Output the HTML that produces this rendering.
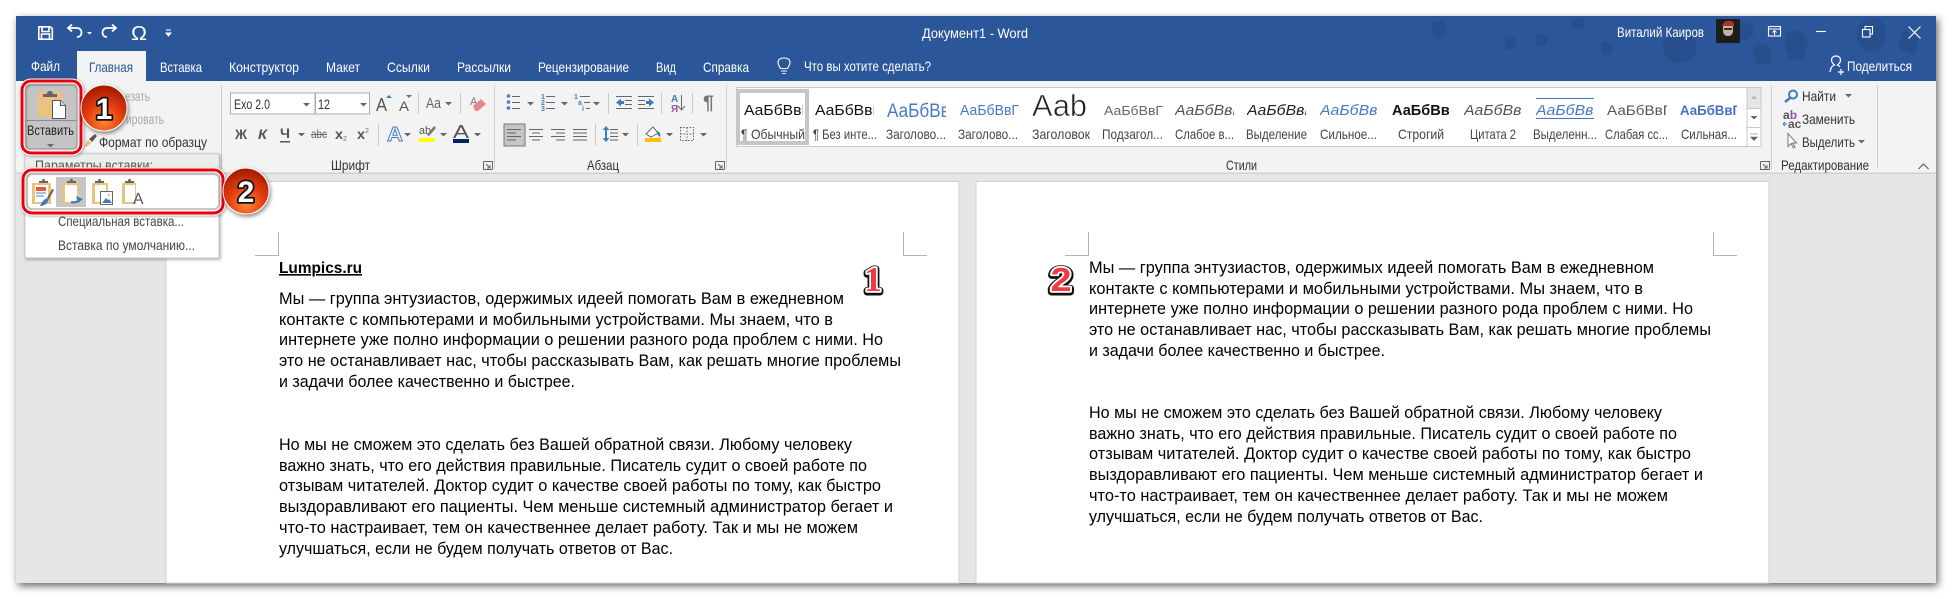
<!DOCTYPE html>
<html lang="ru"><head><meta charset="utf-8"><title>Документ1 - Word</title>
<style>
html,body{margin:0;padding:0;background:#fff;width:1952px;height:599px;overflow:hidden}
svg{display:block}
text{font-family:"Liberation Sans","Noto Sans CJK SC",sans-serif}
.t{font-size:14px;fill:#fff}
.l{font-size:14px;fill:#444}
.g{font-size:14px;fill:#aaa}
.b{font-size:17px;fill:#000}
</style></head><body>
<svg width="1952" height="599" viewBox="0 0 1952 599" xmlns="http://www.w3.org/2000/svg">
<defs>
<filter id="ws" x="-5%" y="-10%" width="110%" height="120%"><feDropShadow dx="2" dy="3" stdDeviation="4" flood-color="#000" flood-opacity=".6"/></filter>
<filter id="ms" x="-10%" y="-10%" width="120%" height="120%"><feDropShadow dx="1" dy="1" stdDeviation="1.5" flood-color="#000" flood-opacity=".35"/></filter>
<filter id="bs" x="-30%" y="-30%" width="160%" height="160%"><feDropShadow dx="1" dy="2" stdDeviation="2" flood-color="#000" flood-opacity=".5"/></filter>
<radialGradient id="bg" cx="50%" cy="78%" r="72%"><stop offset="0" stop-color="#ff8a35"/><stop offset=".5" stop-color="#e8400f"/><stop offset="1" stop-color="#a81e02"/></radialGradient>
<path id="c" d="M0 0h7l-3.5 3.5z" fill="#666"/>
<g id="lch" fill="none" stroke="#666"><path d="M.5 .5h9v8M.5 .5v8h9"/><path d="M3 3l4 4M7 4v3H4"/></g>
</defs>

<!-- window -->
<rect x="16" y="16" width="1920" height="567" fill="#e6e6e6" filter="url(#ws)"/>
<rect x="16" y="16" width="1920" height="65" fill="#2b579a"/>

<!-- titlebar doodles -->
<g fill="#274f8e">
<path d="M1439 22c6-3 8 2 7 8 0 5-4 9-7 9s-7-4-7-9c0-6 2-10 7-8z"/>
<rect x="1505" y="37" width="11" height="13" rx="3"/>
<circle cx="1541" cy="40" r="6.5"/>
<rect x="1571" y="18" width="13" height="11" rx="4"/>
<rect x="1601" y="42" width="12" height="13" rx="3"/>
<path d="M1670 33c12-6 24 0 26 11 1 9-2 15-10 18-10 3-18 0-22-9-3-8 0-16 6-20z"/>
<circle cx="1745" cy="31" r="9"/>
<path d="M1754 45c7-3 15-2 17 5 2 6-1 9-2 14h-12c-2-6-7-12-3-19z"/>
<path d="M1785 34l16-5 8 16-16 8c-5 1-6 1-8-3z"/>
<rect x="1788" y="42" width="17" height="18" rx="3"/>
<path d="M1867 19c9-4 19 2 19 15 0 10-6 18-14 18-9 0-15-8-15-17 0-8 4-14 10-16z"/>
<path d="M1903 30l17 7-6 18-17-7z"/>
</g>

<!-- QAT -->
<g fill="none" stroke="#fff" stroke-width="1.6">
<path d="M38.800 26.800h11.500l2 2v10.400H38.800z"/><path d="M42 27v4.500h7V27M41.500 39v-5h8v5"/>
<path d="M77 37c3.500 0 4.500-2.500 4.500-4.500s-1.500-4.500-4.500-4.500h-8" stroke-width="1.800"/><path d="M72 24.500l-4 3.500 4 3.500" stroke-width="1.800"/>
<path d="M107 37c-3.500 0-4.500-2.500-4.500-4.500s1.500-4.500 4.500-4.500h8" stroke-width="1.800"/><path d="M112 24.500l4 3.500-4 3.500" stroke-width="1.800"/>
</g>
<path d="M87 32h5l-2.500 2.500z" fill="#fff"/>
<text x="131" y="40" font-size="20" fill="#fff" textLength="16" lengthAdjust="spacingAndGlyphs">Ω</text>
<path d="M166 30h5M166 33h5l-2.500 3z" fill="#fff" stroke="#fff"/>

<!-- tabs -->
<rect x="77" y="51" width="69" height="30" fill="#f3f3f3"/>
<g>
<text class="t" x="31" y="71" textLength="29" lengthAdjust="spacingAndGlyphs">Файл</text>
<text class="t" x="89" y="72" textLength="44" lengthAdjust="spacingAndGlyphs" style="fill:#2b579a">Главная</text>
<text class="t" x="160" y="72" textLength="42" lengthAdjust="spacingAndGlyphs">Вставка</text>
<text class="t" x="229" y="72" textLength="70" lengthAdjust="spacingAndGlyphs">Конструктор</text>
<text class="t" x="326" y="72" textLength="34" lengthAdjust="spacingAndGlyphs">Макет</text>
<text class="t" x="387" y="72" textLength="43" lengthAdjust="spacingAndGlyphs">Ссылки</text>
<text class="t" x="457" y="72" textLength="54" lengthAdjust="spacingAndGlyphs">Рассылки</text>
<text class="t" x="538" y="72" textLength="91" lengthAdjust="spacingAndGlyphs">Рецензирование</text>
<text class="t" x="656" y="72" textLength="20" lengthAdjust="spacingAndGlyphs">Вид</text>
<text class="t" x="703" y="72" textLength="46" lengthAdjust="spacingAndGlyphs">Справка</text>
<text class="t" x="804" y="71" textLength="127" lengthAdjust="spacingAndGlyphs">Что вы хотите сделать?</text>
<text class="t" x="922" y="38" textLength="106" lengthAdjust="spacingAndGlyphs">Документ1  -  Word</text>
<text class="t" x="1617" y="37" textLength="87" lengthAdjust="spacingAndGlyphs">Виталий Каиров</text>
<text class="t" x="1847" y="71" textLength="65" lengthAdjust="spacingAndGlyphs">Поделиться</text>
</g>
<path d="M780.500 68.500c-1-2.500-2.500-3-2.500-6 0-3 2.500-4.500 6-4.500s6 1.500 6 4.500c0 3-1.500 3.500-2.500 6zM781 71h6M782.500 73.500h3" fill="none" stroke="#fff" stroke-width="1.100"/>
<!-- avatar -->
<rect x="1716" y="19" width="24" height="24" fill="#1d1d1d"/>
<path d="M1722 26c1-4 5-6 8-5 3 0 5 3 4 5z" fill="#a8322c"/>
<path d="M1723 26h10v5c0 3-2 5-5 5s-5-2-5-5z" fill="#c9b39a"/>
<rect x="1724" y="28" width="8" height="2" fill="#333"/>
<!-- window controls -->
<g fill="none" stroke="#fff" stroke-width="1.100">
<rect x="1768.500" y="26.500" width="12" height="9.500"/><path d="M1769 29h11M1774.500 35v-4M1772.500 32.500l2-2 2 2"/>
<path d="M1816 31.500h10"/>
<rect x="1862.500" y="29.500" width="7.500" height="7.500"/><path d="M1865 29v-2.500h7.500v7.500H1870"/>
<path d="M1908.500 26.500l12 12M1920.500 26.500l-12 12" stroke-width="1.200"/>
<path d="M1830 72c1-5 2-6 4.500-7-2-1.500-3-3-3-5 0-2.500 2-4 4.500-4s4.500 1.500 4.500 4c0 2-1 3.500-3 5 1 .5 2 1 2.500 2M1841 69v6M1838 72h6" stroke-width="1.200"/>
</g>

<!-- ribbon -->
<rect x="16" y="81" width="1920" height="92" fill="#f3f3f3"/>
<rect x="16" y="172.500" width="1920" height="1.500" fill="#d0d0d0"/>
<rect x="16" y="174" width="1920" height="409" fill="#e6e6e6"/>
<!-- pages -->
<rect x="166" y="181.500" width="793" height="401.500" fill="#fff" stroke="#d2d2d2"/>
<rect x="976" y="181.500" width="793" height="401.500" fill="#fff" stroke="#d2d2d2"/>
<g fill="none" stroke="#b4b4b4">
<path d="M278.500 232v23.500H255M903.500 232v23.500H927M1088.500 232v23.500H1065M1713.500 232v23.500H1737"/>
</g>

<!-- page 1 text -->
<text x="279" y="273" font-size="16" font-weight="bold" fill="#000" textLength="83" lengthAdjust="spacingAndGlyphs" text-decoration="underline">Lumpics.ru</text>
<text class="b" x="279" y="304" textLength="565" lengthAdjust="spacingAndGlyphs">Мы — группа энтузиастов, одержимых идеей помогать Вам в ежедневном</text>
<text class="b" x="279" y="325" textLength="554" lengthAdjust="spacingAndGlyphs">контакте с компьютерами и мобильными устройствами. Мы знаем, что в</text>
<text class="b" x="279" y="345" textLength="604" lengthAdjust="spacingAndGlyphs">интернете уже полно информации о решении разного рода проблем с ними. Но</text>
<text class="b" x="279" y="366" textLength="622" lengthAdjust="spacingAndGlyphs">это не останавливает нас, чтобы рассказывать Вам, как решать многие проблемы</text>
<text class="b" x="279" y="387" textLength="296" lengthAdjust="spacingAndGlyphs">и задачи более качественно и быстрее.</text>
<text class="b" x="279" y="450" textLength="573" lengthAdjust="spacingAndGlyphs">Но мы не сможем это сделать без Вашей обратной связи. Любому человеку</text>
<text class="b" x="279" y="471" textLength="588" lengthAdjust="spacingAndGlyphs">важно знать, что его действия правильные. Писатель судит о своей работе по</text>
<text class="b" x="279" y="491" textLength="602" lengthAdjust="spacingAndGlyphs">отзывам читателей. Доктор судит о качестве своей работы по тому, как быстро</text>
<text class="b" x="279" y="512" textLength="614" lengthAdjust="spacingAndGlyphs">выздоравливают его пациенты. Чем меньше системный администратор бегает и</text>
<text class="b" x="279" y="533" textLength="579" lengthAdjust="spacingAndGlyphs">что-то настраивает, тем он качественнее делает работу. Так и мы не можем</text>
<text class="b" x="279" y="554" textLength="394" lengthAdjust="spacingAndGlyphs">улучшаться, если не будем получать ответов от Вас.</text>

<!-- page 2 text -->
<text class="b" x="1089" y="273" textLength="565" lengthAdjust="spacingAndGlyphs">Мы — группа энтузиастов, одержимых идеей помогать Вам в ежедневном</text>
<text class="b" x="1089" y="294" textLength="554" lengthAdjust="spacingAndGlyphs">контакте с компьютерами и мобильными устройствами. Мы знаем, что в</text>
<text class="b" x="1089" y="314" textLength="604" lengthAdjust="spacingAndGlyphs">интернете уже полно информации о решении разного рода проблем с ними. Но</text>
<text class="b" x="1089" y="335" textLength="622" lengthAdjust="spacingAndGlyphs">это не останавливает нас, чтобы рассказывать Вам, как решать многие проблемы</text>
<text class="b" x="1089" y="356" textLength="296" lengthAdjust="spacingAndGlyphs">и задачи более качественно и быстрее.</text>
<text class="b" x="1089" y="418" textLength="573" lengthAdjust="spacingAndGlyphs">Но мы не сможем это сделать без Вашей обратной связи. Любому человеку</text>
<text class="b" x="1089" y="439" textLength="588" lengthAdjust="spacingAndGlyphs">важно знать, что его действия правильные. Писатель судит о своей работе по</text>
<text class="b" x="1089" y="459" textLength="602" lengthAdjust="spacingAndGlyphs">отзывам читателей. Доктор судит о качестве своей работы по тому, как быстро</text>
<text class="b" x="1089" y="480" textLength="614" lengthAdjust="spacingAndGlyphs">выздоравливают его пациенты. Чем меньше системный администратор бегает и</text>
<text class="b" x="1089" y="501" textLength="579" lengthAdjust="spacingAndGlyphs">что-то настраивает, тем он качественнее делает работу. Так и мы не можем</text>
<text class="b" x="1089" y="522" textLength="394" lengthAdjust="spacingAndGlyphs">улучшаться, если не будем получать ответов от Вас.</text>

<!-- red digits on pages -->
<g font-weight="bold" stroke-linejoin="round">
<g text-anchor="middle" style="font-family:'Liberation Serif',serif">
<text x="873" y="292" font-size="35" style="font-family:'Liberation Serif',serif" fill="#111" stroke="#111" stroke-width="7">1</text>
<text x="873" y="291" font-size="35" style="font-family:'Liberation Serif',serif" fill="#fff" stroke="#fff" stroke-width="3.500">1</text>
<text x="873" y="291" font-size="35" style="font-family:'Liberation Serif',serif" fill="#ee3a43">1</text>
</g>
<text x="1050.500" y="292" font-size="33" fill="#111" stroke="#111" stroke-width="7" textLength="21" lengthAdjust="spacingAndGlyphs">2</text>
<text x="1050.500" y="291" font-size="33" fill="#fff" stroke="#fff" stroke-width="3.500" textLength="21" lengthAdjust="spacingAndGlyphs">2</text>
<text x="1050.500" y="291" font-size="33" fill="#ee3a43" textLength="21" lengthAdjust="spacingAndGlyphs">2</text>
</g>

<!-- clipboard group -->
<text class="g" x="125" y="101" textLength="25" lengthAdjust="spacingAndGlyphs">езать</text>
<text class="g" x="126" y="124" textLength="38" lengthAdjust="spacingAndGlyphs">ировать</text>
<path d="M84 146l4-6 3 3-5 4z" fill="#e2bd80"/><path d="M89 139l6-5 2 2-5 6z" fill="#555"/>
<text class="l" x="99" y="147" textLength="108" lengthAdjust="spacingAndGlyphs" style="fill:#333">Формат по образцу</text>
<rect x="221" y="85" width="1" height="84" fill="#d0d0d0"/>

<!-- font group -->
<rect x="230.500" y="93" width="84.500" height="21" fill="#fff" stroke="#ababab"/>
<rect x="315.500" y="93" width="54" height="21" fill="#fff" stroke="#ababab"/>
<text class="l" x="234" y="109" textLength="36" lengthAdjust="spacingAndGlyphs" style="fill:#333">Exo 2.0</text>
<text class="l" x="318" y="109" textLength="12" lengthAdjust="spacingAndGlyphs" style="fill:#333">12</text>
<use href="#c" x="303" y="103"/><use href="#c" x="360" y="103"/>
<text x="376" y="111" font-size="18" fill="#555" textLength="11" lengthAdjust="spacingAndGlyphs">A</text>
<path d="M386 98l3-3 3 3z" fill="#3f7cbc"/>
<text x="399" y="111" font-size="14" fill="#555" textLength="10" lengthAdjust="spacingAndGlyphs">A</text>
<path d="M406 95h6l-3 3z" fill="#3f7cbc"/>
<rect x="418" y="93" width="1" height="21" fill="#c8c8c8"/>
<text x="426" y="108" font-size="15" fill="#666" textLength="15" lengthAdjust="spacingAndGlyphs">Aa</text>
<use href="#c" x="445" y="102"/>
<rect x="460" y="93" width="1" height="21" fill="#c8c8c8"/>
<text x="470" y="105" font-size="11" fill="#777">A</text>
<path d="M473 106l8-7 5 5-8 7h-3z" fill="#e8848c"/>
<g font-weight="bold" fill="#555" font-size="14">
<text x="235" y="139" textLength="12" lengthAdjust="spacingAndGlyphs">Ж</text>
<text x="258" y="139" font-style="italic" textLength="9" lengthAdjust="spacingAndGlyphs">К</text>
<text x="280" y="138" textLength="10" lengthAdjust="spacingAndGlyphs">Ч</text>
<text x="335" y="139" textLength="8" lengthAdjust="spacingAndGlyphs">x</text>
<text x="357" y="139" textLength="8" lengthAdjust="spacingAndGlyphs">x</text>
</g>
<rect x="280" y="141" width="10" height="1.500" fill="#555"/>
<use href="#c" x="298" y="133"/>
<text x="311" y="138" font-size="12" fill="#666" textLength="16" lengthAdjust="spacingAndGlyphs">abc</text><rect x="311" y="134" width="16" height="1" fill="#666"/>
<text x="343" y="141" font-size="7" fill="#3f7cbc">2</text><text x="365" y="133" font-size="7" fill="#3f7cbc">2</text>
<rect x="378" y="124" width="1" height="22" fill="#c8c8c8"/>
<text x="387" y="141" font-size="20" font-weight="bold" fill="#e8f0fa" stroke="#4a7ebb" stroke-width=".9" textLength="16" lengthAdjust="spacingAndGlyphs">A</text>
<use href="#c" x="404" y="133"/>
<text x="419" y="134" font-size="11" fill="#555" textLength="12" lengthAdjust="spacingAndGlyphs">ab</text>
<path d="M427 135l7-9 2 2-7 8z" fill="#777"/>
<rect x="419" y="138" width="16" height="4" fill="#ffff00"/>
<use href="#c" x="440" y="133"/>
<text x="453" y="138" font-size="18" fill="#555" textLength="16" lengthAdjust="spacingAndGlyphs">A</text>
<rect x="453" y="139" width="16" height="4" fill="#002060"/>
<use href="#c" x="474" y="133"/>
<text class="l" x="331" y="170" textLength="39" lengthAdjust="spacingAndGlyphs" style="fill:#333">Шрифт</text>
<use href="#lch" x="483" y="161"/>
<rect x="494" y="85" width="1" height="84" fill="#d0d0d0"/>

<!-- paragraph group -->
<g fill="#4a7ebb"><circle cx="508.500" cy="96" r="1.800"/><circle cx="508.500" cy="102" r="1.800"/><circle cx="508.500" cy="108" r="1.800"/></g>
<g stroke="#666" stroke-width="1" fill="none">
<path d="M512 96.500h8M512 102.500h8M512 108.500h8"/>
<path d="M546 96.500h9M546 102.500h9M546 108.500h9"/>
<path d="M580 96.500h10M584 102.500h6M586 108.500h4"/>
<path d="M616 96.500h16M625 100.500h7M625 104.500h7M616 108.500h16"/>
<path d="M638 96.500h16M638 100.500h7M638 104.500h7M638 108.500h16"/>
<path d="M681.500 95v15M678 106l3.500 4 3.500-4"/>
<path d="M529 129.500h14M532 133h8M529 136.500h14M532 140h8"/>
<path d="M551 129.500h14M556 133h9M551 136.500h14M556 140h9"/>
<path d="M573 129.500h14M573 133h14M573 136.500h14M573 140h14"/>
<path d="M610 129.500h8M610 133h8M610 136.500h8M610 140h8"/>
<path d="M680.500 127.500h13v13h-13zM687 127.500v13M680.500 134h13" stroke-dasharray="1.500 1.500"/>
</g>
<g font-size="7" fill="#3f7cbc" font-weight="bold">
<text x="541" y="99">1</text><text x="541" y="105">2</text><text x="541" y="111">3</text>
<text x="574" y="99">1</text><text x="578" y="105">a</text><text x="582" y="111">i</text>
</g>
<path d="M616 102.500l5-4v2.500h3v3h-3v2.500zM654 102.500l-5-4v2.500h-3v3h3v2.500z" fill="#3f7cbc"/>
<text x="671" y="102" font-size="10" font-weight="bold" fill="#3f7cbc">А</text>
<text x="671" y="112" font-size="10" font-weight="bold" fill="#8a5aa8">Я</text>
<text x="703" y="109" font-size="19" font-weight="bold" fill="#777" textLength="11" lengthAdjust="spacingAndGlyphs">¶</text>
<use href="#c" x="527" y="102"/><use href="#c" x="561" y="102"/><use href="#c" x="593" y="102"/>
<rect x="608" y="93" width="1" height="21" fill="#c8c8c8"/><rect x="661" y="93" width="1" height="21" fill="#c8c8c8"/><rect x="692" y="93" width="1" height="21" fill="#c8c8c8"/>
<rect x="504" y="124" width="21" height="22" fill="#c6c6c6" stroke="#777" stroke-width="1"/>
<g stroke="#666" fill="none"><path d="M507 129.500h14M507 133h9M507 136.500h14M507 140h9"/></g>
<rect x="595" y="124" width="1" height="22" fill="#c8c8c8"/><rect x="637" y="124" width="1" height="22" fill="#c8c8c8"/>
<path d="M606 126l3.500 4h-2.500v8h2.500l-3.500 4-3.500-4h2.500v-8h-2.500z" fill="#3f7cbc"/>
<use href="#c" x="622" y="133"/>
<path d="M646 134l7-7 5 6-7 4z" fill="#fff" stroke="#666"/><path d="M657 131c3 1 4 3 3 6-2-1-3-3-3-6z" fill="#3f7cbc"/>
<rect x="645" y="138" width="16" height="4" fill="#ffc000"/>
<use href="#c" x="666" y="133"/><use href="#c" x="700" y="133"/>
<text class="l" x="587" y="170" textLength="32" lengthAdjust="spacingAndGlyphs" style="fill:#333">Абзац</text>
<use href="#lch" x="715" y="161"/>
<rect x="726" y="85" width="1" height="84" fill="#d0d0d0"/>

<!-- styles gallery -->
<rect x="736.500" y="87.500" width="1024" height="59" fill="#fff" stroke="#c8c8c8"/>
<rect x="738" y="91" width="69" height="52" fill="#fff" stroke="#c6c6c6" stroke-width="4"/>
<g>
<svg x="744" y="98" width="59" height="24"><text x="0" y="17" font-size="15" fill="#111" textLength="66" lengthAdjust="spacingAndGlyphs">АаБбВвГ</text></svg>
<svg x="815" y="98" width="59" height="24"><text x="0" y="17" font-size="15" fill="#111" textLength="66" lengthAdjust="spacingAndGlyphs">АаБбВвГ</text></svg>
<svg x="887" y="94" width="59" height="28"><text x="0" y="23" font-size="19" fill="#4a78c8" textLength="72" lengthAdjust="spacingAndGlyphs">АаБбВвГ</text></svg>
<svg x="960" y="98" width="59" height="24"><text x="0" y="17" font-size="15" fill="#4a78c8" textLength="59" lengthAdjust="spacingAndGlyphs">АаБбВвГ</text></svg>
<text x="1032" y="116" font-size="31" fill="#222" stroke="#fff" stroke-width=".6" textLength="55" lengthAdjust="spacingAndGlyphs">Ааb</text>
<svg x="1104" y="98" width="59" height="24"><text x="0" y="17" font-size="13" fill="#666" textLength="59" lengthAdjust="spacingAndGlyphs">АаБбВвГ</text></svg>
<svg x="1175" y="98" width="59" height="24"><text x="0" y="17" font-size="15" font-style="italic" fill="#555" textLength="66" lengthAdjust="spacingAndGlyphs">АаБбВвГ</text></svg>
<svg x="1247" y="98" width="59" height="24"><text x="0" y="17" font-size="15" font-style="italic" fill="#222" textLength="66" lengthAdjust="spacingAndGlyphs">АаБбВвГ</text></svg>
<svg x="1320" y="98" width="58" height="24"><text x="0" y="17" font-size="15" font-style="italic" fill="#4a78c8" textLength="66" lengthAdjust="spacingAndGlyphs">АаБбВвГ</text></svg>
<svg x="1392" y="98" width="58" height="24"><text x="0" y="17" font-size="15" font-weight="bold" fill="#111" textLength="66" lengthAdjust="spacingAndGlyphs">АаБбВвГ</text></svg>
<svg x="1464" y="98" width="58" height="24"><text x="0" y="17" font-size="15" font-style="italic" fill="#555" textLength="66" lengthAdjust="spacingAndGlyphs">АаБбВвГ</text></svg>
<svg x="1536" y="98" width="58" height="24"><text x="0" y="17" font-size="15" font-style="italic" fill="#4a78c8" textLength="66" lengthAdjust="spacingAndGlyphs">АаБбВвГ</text></svg>
<rect x="1536" y="98" width="58" height="1" fill="#4472c4"/><rect x="1536" y="118" width="58" height="1" fill="#4472c4"/>
<svg x="1607" y="98" width="60" height="24"><text x="0" y="17" font-size="14" fill="#555" textLength="64" lengthAdjust="spacingAndGlyphs">АаБбВвГ</text></svg>
<svg x="1680" y="98" width="57" height="24"><text x="0" y="17" font-size="14" font-weight="bold" fill="#4472c4" textLength="60" lengthAdjust="spacingAndGlyphs">АаБбВвГ</text></svg>
</g>
<g>
<text class="l" x="741" y="139" textLength="64" lengthAdjust="spacingAndGlyphs">¶ Обычный</text>
<text class="l" x="813" y="139" textLength="64" lengthAdjust="spacingAndGlyphs">¶ Без инте...</text>
<text class="l" x="886" y="139" textLength="60" lengthAdjust="spacingAndGlyphs">Заголово...</text>
<text class="l" x="958" y="139" textLength="60" lengthAdjust="spacingAndGlyphs">Заголово...</text>
<text class="l" x="1032" y="139" textLength="58" lengthAdjust="spacingAndGlyphs">Заголовок</text>
<text class="l" x="1102" y="139" textLength="61" lengthAdjust="spacingAndGlyphs">Подзагол...</text>
<text class="l" x="1175" y="139" textLength="59" lengthAdjust="spacingAndGlyphs">Слабое в...</text>
<text class="l" x="1246" y="139" textLength="61" lengthAdjust="spacingAndGlyphs">Выделение</text>
<text class="l" x="1320" y="139" textLength="57" lengthAdjust="spacingAndGlyphs">Сильное...</text>
<text class="l" x="1398" y="139" textLength="46" lengthAdjust="spacingAndGlyphs">Строгий</text>
<text class="l" x="1470" y="139" textLength="46" lengthAdjust="spacingAndGlyphs">Цитата 2</text>
<text class="l" x="1533" y="139" textLength="64" lengthAdjust="spacingAndGlyphs">Выделенн...</text>
<text class="l" x="1605" y="139" textLength="63" lengthAdjust="spacingAndGlyphs">Слабая сс...</text>
<text class="l" x="1681" y="139" textLength="56" lengthAdjust="spacingAndGlyphs">Сильная...</text>
</g>
<rect x="1747" y="87.500" width="14" height="21" fill="#e6e6e6" stroke="#c8c8c8"/>
<rect x="1747" y="108.500" width="14" height="19" fill="#fff" stroke="#c8c8c8"/>
<rect x="1747" y="127.500" width="14" height="19" fill="#fff" stroke="#c8c8c8"/>
<path d="M1750.500 99l3.500-3.500 3.500 3.500z" fill="#bbb"/>
<path d="M1750.500 116h7l-3.500 3.500z" fill="#666"/>
<path d="M1750 134h8M1750.500 137h7l-3.500 3.500z" fill="#666" stroke="#666" stroke-width=".6"/>
<text class="l" x="1226" y="170" textLength="31" lengthAdjust="spacingAndGlyphs" style="fill:#333">Стили</text>
<use href="#lch" x="1760" y="161"/>
<rect x="1771" y="85" width="1" height="84" fill="#d0d0d0"/>

<!-- editing group -->
<circle cx="1793" cy="94.500" r="4" fill="none" stroke="#3f7cbc" stroke-width="2"/><path d="M1790 98l-5 4" stroke="#3f7cbc" stroke-width="2.500"/>
<text class="l" x="1802" y="101" textLength="34" lengthAdjust="spacingAndGlyphs" style="fill:#333">Найти</text>
<use href="#c" x="1845" y="94"/>
<text x="1783" y="119" font-size="12" font-weight="bold" fill="#555">a<tspan fill="#8a5aa8">b</tspan></text>
<text x="1788" y="128" font-size="12" font-weight="bold" fill="#555">ac</text>
<path d="M1783 124h4M1783 124l2-2M1783 124l2 2" stroke="#3f7cbc"/>
<text class="l" x="1802" y="124" textLength="53" lengthAdjust="spacingAndGlyphs" style="fill:#333">Заменить</text>
<path d="M1788 133.500v13l3-3 2.500 4.500 1.500-1-2.500-4h4z" fill="#fff" stroke="#777"/>
<text class="l" x="1802" y="147" textLength="53" lengthAdjust="spacingAndGlyphs" style="fill:#333">Выделить</text>
<use href="#c" x="1858" y="140"/>
<text class="l" x="1781" y="170" textLength="88" lengthAdjust="spacingAndGlyphs" style="fill:#333">Редактирование</text>
<rect x="1877" y="85" width="1" height="84" fill="#d0d0d0"/>
<path d="M1918.500 169l5-5 5 5" fill="none" stroke="#555"/>

<!-- paste button -->
<rect x="25" y="84" width="52" height="65" fill="#c4c4c4"/>
<rect x="25" y="120" width="52" height="1" fill="#8c8c8c"/>
<path d="M38 92h24v25H38z" fill="#eac47f"/>
<path d="M43 97v-3h4c0-4 6-4 6 0h4v3z" fill="#666"/>
<path d="M52.500 100.500h8l5 5v13h-13z" fill="#fff" stroke="#555"/><path d="M60.500 100.500v5h5" fill="#ddd" stroke="#555"/>
<text class="l" x="27" y="135" textLength="47" lengthAdjust="spacingAndGlyphs" style="fill:#222">Вставить</text>
<use href="#c" x="47" y="144"/>

<!-- dropdown -->
<rect x="25" y="154" width="194" height="104" fill="#fff" stroke="#c6c6c6" filter="url(#ms)"/>
<rect x="26" y="155" width="192" height="17" fill="#ededed"/>
<text class="l" x="35" y="170" textLength="118" lengthAdjust="spacingAndGlyphs" style="fill:#555">Параметры вставки:</text>
<rect x="25" y="171" width="194" height="41" fill="#fff"/>
<rect x="56" y="177" width="30" height="30" fill="#c6c6c6"/>
<!-- paste icons -->
<g>
<path d="M32 183h19v21H32z" fill="#eac47f"/><rect x="35" y="185" width="13" height="17" fill="#fff"/>
<rect x="36" y="187" width="10" height="4" fill="#e05a3c"/>
<path d="M36 193h10M36 196h8" stroke="#4a7ebb"/>
<path d="M39 183v-2h3c0-3 3-3 3 0h3v2z" fill="#666"/>
<path d="M40 206c2-5 5-8 9-8-1 5-4 8-9 8z" fill="#3f7cbc"/><path d="M47 198l5-9 2 1-5 9z" fill="#666"/>

<path d="M62 183h17v21H62z" fill="#eac47f"/><rect x="65" y="185" width="12" height="17" fill="#fff"/>
<path d="M67 183v-2h3c0-3 3-3 3 0h3v2z" fill="#666"/>
<path d="M71 202c4 1 7 0 8-3" fill="none" stroke="#3f7cbc" stroke-width="2.200"/><path d="M76 196l7 3-5 4z" fill="#3f7cbc"/>

<path d="M92 183h16v21H92z" fill="#eac47f"/><rect x="95" y="185" width="11" height="17" fill="#fff"/>
<path d="M95 183v-2h3c0-3 3-3 3 0h3v2z" fill="#666"/>
<rect x="100.500" y="191.500" width="12" height="13" fill="#fff" stroke="#666"/>
<path d="M102 203l4-5 2 2 1-1 3 4z" fill="#3f7cbc"/><circle cx="109" cy="195" r="1.100" fill="#eab56a"/>

<path d="M122 183h14v21h-14z" fill="#eac47f"/><rect x="125" y="185" width="10" height="17" fill="#fff"/>
<path d="M125 183v-2h3c0-3 3-3 3 0h3v2z" fill="#666"/>
<text x="133" y="204" font-size="16" fill="#555" textLength="10.500" lengthAdjust="spacingAndGlyphs">A</text>
</g>
<text class="l" x="58" y="226" textLength="126" lengthAdjust="spacingAndGlyphs">Специальная вставка...</text>
<text class="l" x="58" y="250" textLength="137" lengthAdjust="spacingAndGlyphs">Вставка по умолчанию...</text>

<!-- red highlight frames -->
<g fill="none">
<rect x="22" y="81" width="59" height="72" rx="9" stroke="#fff" stroke-width="5" filter="url(#ms)"/>
<rect x="26" y="85" width="51" height="64" rx="5" stroke="#9a9a9a" stroke-width="1.500" opacity=".8"/>
<rect x="22" y="81" width="59" height="72" rx="9" stroke="#e8000f" stroke-width="3"/>
<rect x="23" y="170" width="200" height="43" rx="9" stroke="#fff" stroke-width="5" filter="url(#ms)"/>
<rect x="27" y="174" width="192" height="35" rx="5" stroke="#a8a8a8" stroke-width="1.500" opacity=".8"/>
<rect x="23" y="170" width="200" height="43" rx="9" stroke="#e8000f" stroke-width="3"/>
</g>

<!-- badges -->
<g filter="url(#bs)">
<circle cx="104" cy="108" r="23" fill="url(#bg)" stroke="#fff" stroke-width="1"/>
<circle cx="246" cy="191" r="23" fill="url(#bg)" stroke="#fff" stroke-width="1"/>
</g>
<g font-weight="bold" font-size="30" text-anchor="middle" stroke-linejoin="round">
<text x="104" y="119" fill="#111" stroke="#111" stroke-width="3.500">1</text>
<text x="104" y="119" fill="#fff">1</text>
<text x="246" y="202" fill="#111" stroke="#111" stroke-width="3.500">2</text>
<text x="246" y="202" fill="#fff">2</text>
</g>
</svg>
</body></html>
